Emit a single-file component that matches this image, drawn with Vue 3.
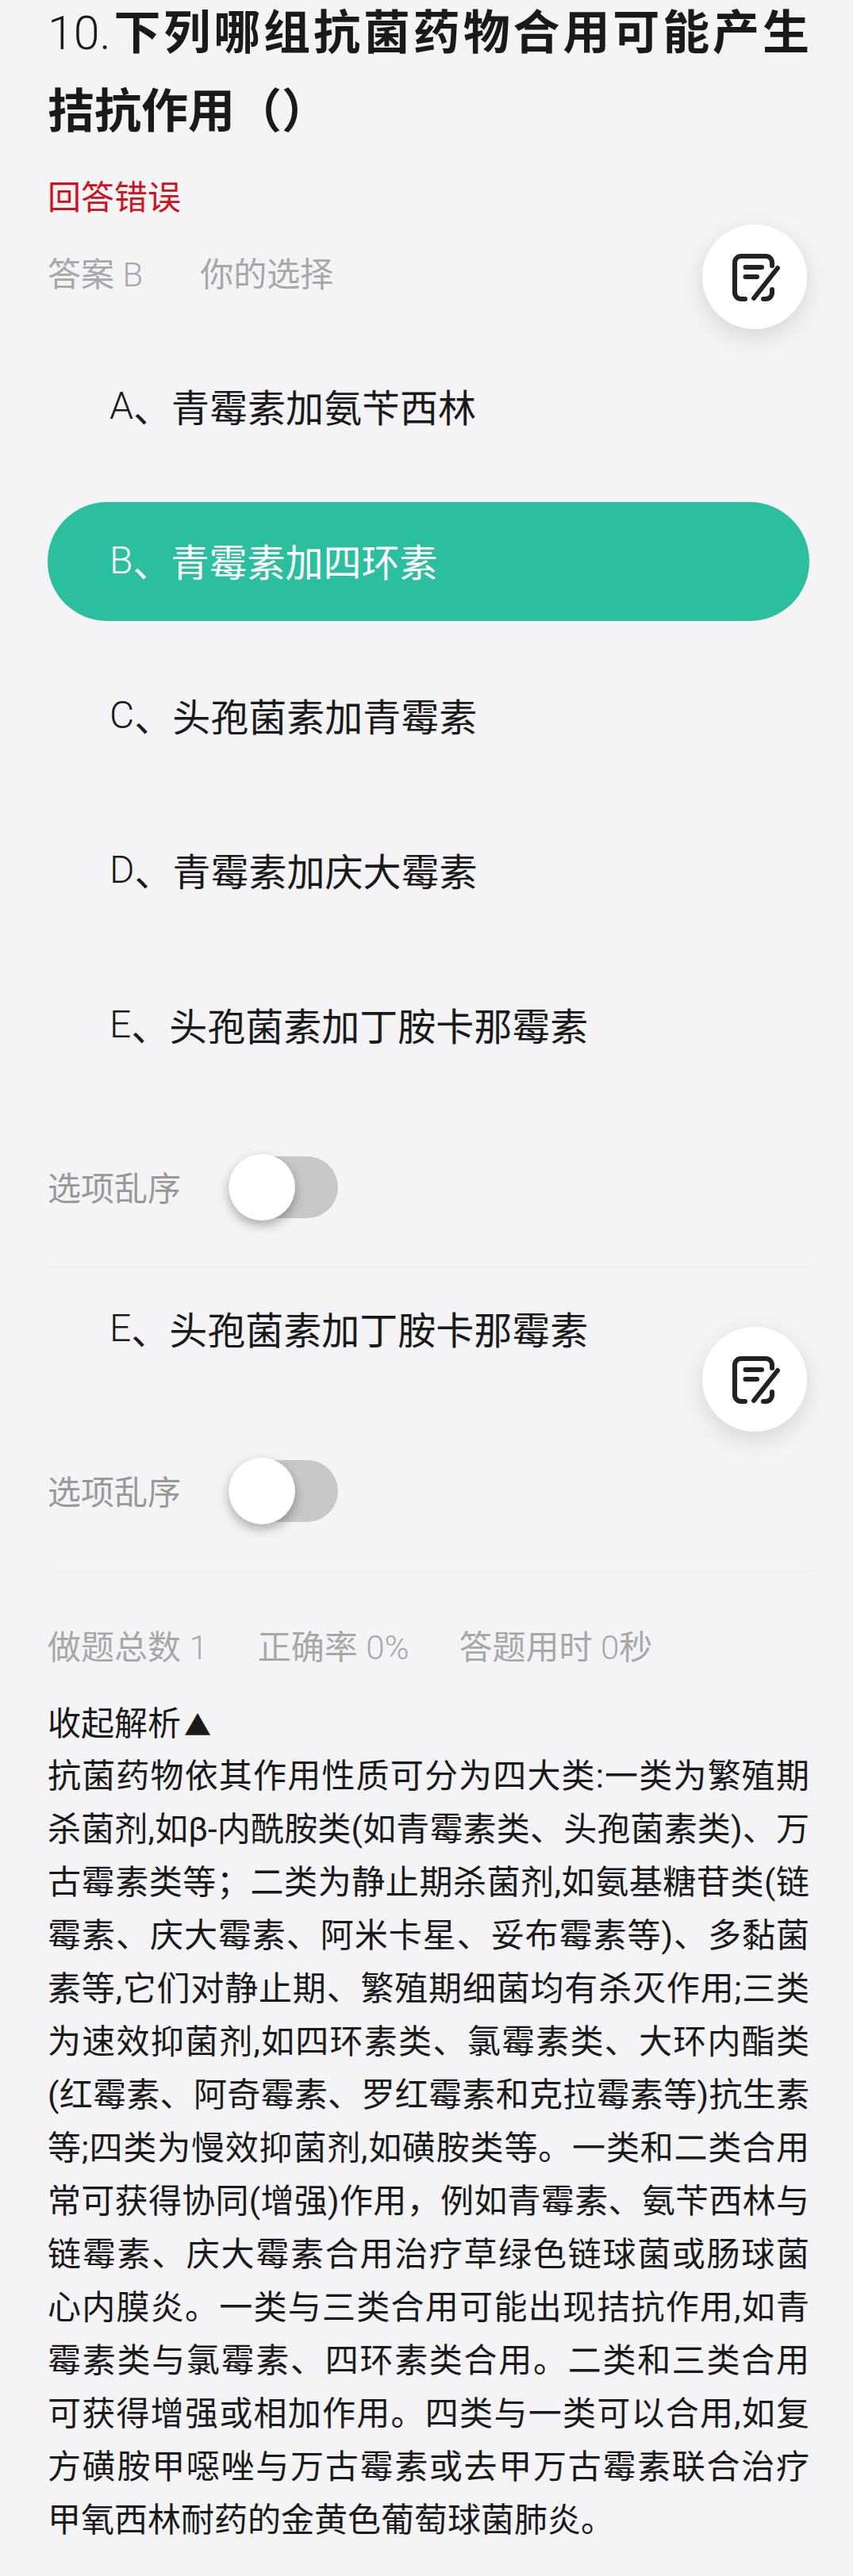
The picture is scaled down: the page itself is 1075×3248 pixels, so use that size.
<template>
  <div class="page">
    <div class="title">
      <span class="num">10.</span><b>下列哪组抗菌药物合用可能产生</b>
    </div>
    <div class="title last"><b>拮抗作用（）</b></div>
    <div class="wrong">回答错误</div>
    <div class="answer">
      <span>答案 <i class="latin">B</i></span>
      <span>你的选择</span>
      <button class="fab fab-one">
        <svg width="60" height="60" viewBox="-2 -1 60 60" fill="none" stroke="#222" stroke-width="6" stroke-linecap="round" stroke-linejoin="round">
          <path d="M16 57H11a8 8 0 0 1-8-8V11a8 8 0 0 1 8-8h31a8 8 0 0 1 8 8v4" />
          <path d="M16.5 17H37M16.5 29H31" />
          <path d="M57 18L27 56" />
          <path d="M39 57h3a8 8 0 0 0 8-8v-4" />
        </svg>
      </button>
    </div>

    <div class="options">
      <div v-for="o in options" :key="o.key" :class="['option', { active: o.key === 'B' }]">
        <span class="latin">{{ o.key }}</span>、{{ o.text }}
      </div>
    </div>

    <div class="shuffle">
      <span class="label">选项乱序</span>
      <div class="toggle"><div class="thumb"></div></div>
    </div>

    <div class="divider"></div>

    <div class="extra">
      <div class="option"><span class="latin">E</span>、头孢菌素加丁胺卡那霉素</div>
      <button class="fab fab-two">
        <svg width="60" height="60" viewBox="-2 -1 60 60" fill="none" stroke="#222" stroke-width="6" stroke-linecap="round" stroke-linejoin="round">
          <path d="M16 57H11a8 8 0 0 1-8-8V11a8 8 0 0 1 8-8h31a8 8 0 0 1 8 8v4" />
          <path d="M16.5 17H37M16.5 29H31" />
          <path d="M57 18L27 56" />
          <path d="M39 57h3a8 8 0 0 0 8-8v-4" />
        </svg>
      </button>
    </div>

    <div class="shuffle second">
      <span class="label">选项乱序</span>
      <div class="toggle"><div class="thumb"></div></div>
    </div>

    <div class="divider"></div>

    <div class="stats">
      <span>做题总数 <i class="latin">1</i></span>
      <span>正确率 <i class="latin">0%</i></span>
      <span>答题用时 <i class="latin">0</i>秒</span>
    </div>

    <div class="toggle-text">收起解析<span class="arrow">▲</span></div>
    <div class="analysis">
      <div v-for="(line, i) in lines" :key="i" :class="['line', { end: i === lines.length - 1 }]">{{ line }}</div>
    </div>
  </div>
</template>

<script setup>
const options = [
  { key: 'A', text: '青霉素加氨苄西林' },
  { key: 'B', text: '青霉素加四环素' },
  { key: 'C', text: '头孢菌素加青霉素' },
  { key: 'D', text: '青霉素加庆大霉素' },
  { key: 'E', text: '头孢菌素加丁胺卡那霉素' }
]

const lines = [
  '抗菌药物依其作用性质可分为四大类:一类为繁殖期',
  '杀菌剂,如β-内酰胺类(如青霉素类、头孢菌素类)、万',
  '古霉素类等；二类为静止期杀菌剂,如氨基糖苷类(链',
  '霉素、庆大霉素、阿米卡星、妥布霉素等)、多黏菌',
  '素等,它们对静止期、繁殖期细菌均有杀灭作用;三类',
  '为速效抑菌剂,如四环素类、氯霉素类、大环内酯类',
  '(红霉素、阿奇霉素、罗红霉素和克拉霉素等)抗生素',
  '等;四类为慢效抑菌剂,如磺胺类等。一类和二类合用',
  '常可获得协同(增强)作用，例如青霉素、氨苄西林与',
  '链霉素、庆大霉素合用治疗草绿色链球菌或肠球菌',
  '心内膜炎。一类与三类合用可能出现拮抗作用,如青',
  '霉素类与氯霉素、四环素类合用。二类和三类合用',
  '可获得增强或相加作用。四类与一类可以合用,如复',
  '方磺胺甲噁唑与万古霉素或去甲万古霉素联合治疗',
  '甲氧西林耐药的金黄色葡萄球菌肺炎。'
]
</script>

<style>
html, body {
  margin: 0;
  background: #f4f4f7;
}
</style>

<style scoped>
.page {
  box-sizing: border-box;
  width: 1075px;
  height: 3248px;
  overflow: hidden;
  padding: 0 55px 0 60px;
  background: #f4f4f7;
  font-family: "Roboto", "Noto Sans CJK SC", sans-serif;
  font-weight: 400;
  color: #1a1a1a;
}
.latin {
  font-style: normal;
  font-weight: 300;
}
.title {
  font-size: 59px;
  line-height: 84px;
  height: 84px;
  text-align: justify;
  text-align-last: justify;
}
.title .num {
  font-weight: 300;
}
.title.last {
  margin-top: 15px;
  text-align-last: left;
}
.title b {
  font-weight: 700;
}
.wrong {
  margin-top: 37px;
  font-size: 42px;
  line-height: 60px;
  color: #d0121b;
}
.answer {
  position: relative;
  margin-top: 37px;
  display: flex;
  gap: 72px;
  font-size: 42px;
  line-height: 60px;
  color: #a8a8a8;
}
.fab {
  position: absolute;
  width: 132px;
  height: 132px;
  padding: 0;
  border: 0;
  border-radius: 50%;
  background: #fff;
  display: flex;
  align-items: center;
  justify-content: center;
  box-shadow: 0 10px 30px rgba(0, 0, 0, 0.12);
}
.fab svg {
  overflow: visible;
}
.fab-one {
  left: 825px;
  top: -34px;
}
.fab-two {
  left: 825px;
  top: 72px;
}
.options {
  margin-top: 61px;
  display: flex;
  flex-direction: column;
  gap: 45px;
}
.option {
  height: 150px;
  box-sizing: border-box;
  padding-left: 78px;
  padding-bottom: 4px;
  display: flex;
  align-items: center;
  font-size: 48px;
  border-radius: 75px;
  color: #1a1a1a;
}
.option.active {
  background: #2bbf9f;
  color: #fff;
}
.shuffle {
  margin-top: 87px;
  height: 84px;
  display: flex;
  align-items: center;
  gap: 60px;
  font-size: 42px;
  color: #999;
}
.shuffle.second {
  margin-top: 87px;
}
.label {
  padding-bottom: 4px;
}
.toggle {
  position: relative;
  width: 138px;
  height: 78px;
  border-radius: 39px;
  background: #c8c8c8;
}
.thumb {
  position: absolute;
  left: 0;
  top: -3px;
  width: 84px;
  height: 84px;
  border-radius: 50%;
  background: #fff;
  box-shadow: 0 6px 14px rgba(0, 0, 0, 0.3);
}
.divider {
  margin-top: 58px;
  height: 2px;
  background: #f0f0f2;
}
.extra {
  position: relative;
  margin-top: 2px;
}
.stats {
  margin-top: 66px;
  display: flex;
  gap: 63px;
  font-size: 42px;
  line-height: 60px;
  color: #a8a8a8;
}
.toggle-text {
  margin-top: 36px;
  font-size: 42px;
  line-height: 60px;
  color: #1a1a1a;
}
.arrow {
  margin-left: 4px;
  font-size: 34px;
}
.analysis {
  font-size: 42px;
  line-height: 67px;
  color: #1a1a1a;
}
.line {
  text-align: justify;
  text-align-last: justify;
  white-space: nowrap;
}
.line.end {
  text-align-last: left;
}
</style>
